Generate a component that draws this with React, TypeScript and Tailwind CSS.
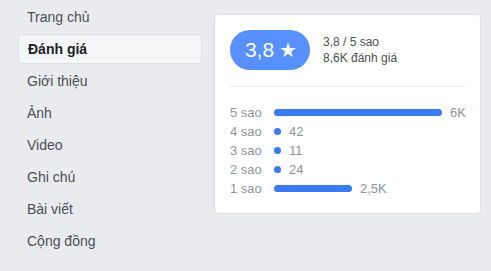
const navItems = [
  "Trang chủ",
  "Đánh giá",
  "Giới thiệu",
  "Ảnh",
  "Video",
  "Ghi chú",
  "Bài viết",
  "Cộng đồng",
];

const rows = [
  { label: "5 sao", width: 168, value: "6K" },
  { label: "4 sao", width: 7, value: "42" },
  { label: "3 sao", width: 7, value: "11" },
  { label: "2 sao", width: 7, value: "24" },
  { label: "1 sao", width: 78, value: "2,5K" },
];

export default function App() {
  return (
    <div
      className="flex h-[271px] w-[491px] overflow-hidden bg-[#e9ebee]"
      style={{ fontFamily: '"Liberation Sans", Arial, sans-serif' }}
    >
      <nav className="flex w-[202px] shrink-0 flex-col gap-[2px] pl-[18px] pt-[2px]">
        {navItems.map((item) => (
          <div
            key={item}
            className={`flex h-[30px] items-center rounded-[3px] pl-[9px] text-[14px] ${
              item === "Đánh giá"
                ? "border border-[#dddfe2] bg-[#f5f6f7] pl-[8px] font-bold text-[#1d2129]"
                : "text-[#4b4f56]"
            }`}
          >
            {item}
          </div>
        ))}
      </nav>

      <div className="ml-[12px] mt-[14px] h-[200px] w-[267px] rounded-[4px] border border-[#dddfe2] bg-white px-[15px] pt-[15px]">
        <div className="flex items-center">
          <div className="flex h-[40px] w-[80px] items-center justify-center rounded-full bg-[#5890ff] pl-[2px] text-[21px] text-white">
            3,8 <span className="ml-[5px] text-[20px]">★</span>
          </div>
          <div className="ml-[13px] text-[12px] leading-[16px] text-[#4b4f56]">
            <div>3,8 / 5 sao</div>
            <div>8,6K đánh giá</div>
          </div>
        </div>

        <div className="mt-[16px] h-px bg-[#e9ebee]" />

        <div className="mt-[16px] flex flex-col">
          {rows.map((row) => (
            <div key={row.label} className="flex h-[19px] items-center text-[13px] text-[#90949c]">
              <span className="w-[44px] shrink-0">{row.label}</span>
              <div
                className="h-[7px] shrink-0 rounded-full bg-[#3b7bf2]"
                style={{ width: row.width }}
              />
              <span className="ml-[8px]">{row.value}</span>
            </div>
          ))}
        </div>
      </div>
    </div>
  );
}
